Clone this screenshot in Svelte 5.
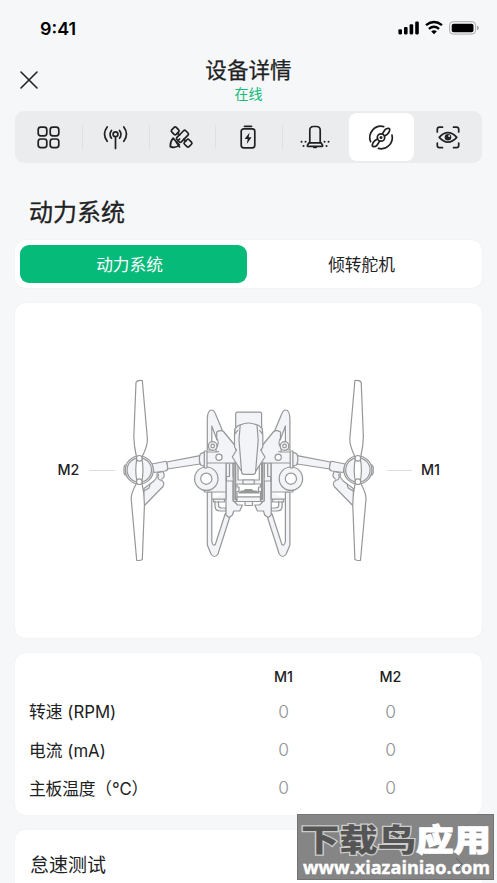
<script lang="ts">
    const tabs = ['overview', 'signal', 'satellite', 'battery', 'radar', 'power', 'vision'];
    const rows = [
        { label: '转速 (RPM)', m1: 0, m2: 0 },
        { label: '电流 (mA)', m1: 0, m2: 0 },
        { label: '主板温度（℃）', m1: 0, m2: 0, tight: true }
    ];

    let activeTab = $state('power');
    let segment = $state('motor');
</script>

{#snippet tabIcon(name: string)}
    <svg class="icon" viewBox="0 0 32 28" width="32" height="28">
        {#if name === 'overview'}
            <rect x="5.2" y="3.2" width="8.6" height="8.6" rx="2.6" />
            <rect x="17.2" y="3.2" width="8.6" height="8.6" rx="2.6" />
            <rect x="5.2" y="15" width="8.6" height="8.6" rx="2.6" />
            <rect x="17.2" y="15" width="8.6" height="8.6" rx="2.6" />
        {:else if name === 'signal'}
            <circle cx="15.5" cy="10.3" r="2.4" />
            <path d="M15.5 12.8V24.5M11.5 6.5Q8.5 10.3 11.5 14.2M19.5 6.5Q22.5 10.3 19.5 14.2M7.2 3Q1.8 10 7.2 17.3M23.8 3Q29.2 10 23.8 17.3" />
        {:else if name === 'satellite'}
            <rect x="6" y="3.7" width="6.4" height="6.4" rx="1.5" transform="rotate(45 9.2 6.9)" />
            <rect x="18.8" y="16" width="6.4" height="6.4" rx="1.5" transform="rotate(45 22 19.2)" />
            <rect x="10.2" y="9.2" width="12.4" height="6.2" rx="1.5" transform="rotate(-45 16.4 12.2)" />
            <path d="M11.5 9.2l2 2M17.8 15.2l2 2M12 16.5l1.6-1.5" />
            <path d="M7 14.2Q4 17.8 4.3 22.6Q10 24.8 13.3 20.8ZM10 17.7l3.6 5.2" />
        {:else if name === 'battery'}
            <rect x="9.2" y="4.8" width="13.6" height="19" rx="2.5" />
            <path d="M12.5 2.3h7" />
            <path class="solid" d="M17.6 8.5l-5 6.5h3.1l-.9 5 4.8-6.7h-3z" />
        {:else if name === 'radar'}
            <path d="M10.8 18.8V6.2Q10.8 2.5 14.5 2.5h3Q21.2 2.5 21.2 6.2v12.6" />
            <path d="M10 18.8h12l1.6 2.4q.2 1.2-1 1.2H9.4q-1.2 0-1-1.2Z" />
            <path class="solid" d="M13.5 22.8h5l-1 1.5h-3z" />
            <path class="dots" d="M2.5 17.8h.1M6.5 17.8h.1M4.5 22h.1M29.5 17.8h.1M25.5 17.8h.1M27.5 22h.1" />
        {:else if name === 'power'}
            <circle cx="16" cy="13.5" r="3.7" />
            <circle class="solid" cx="16" cy="13.5" r="1.5" />
            <path d="M17.4 9.8L20 5.8Q21 4.2 23.8 4.3Q25 4.5 24.6 6.5Q24 9 22 10.5L19.4 12M14.6 17.2L12 21.2Q11 22.8 8.2 22.7Q7 22.5 7.4 20.5Q8 18 10 16.5L12.6 15" />
            <path d="M18.7 2.6A11.2 11.2 0 0 0 5.6 17.6M27 11A11.2 11.2 0 0 1 13.4 24.4" />
        {:else}
            <path d="M5.3 8V5.4q0-2.2 2.2-2.2h3M21.5 3.2h3q2.2 0 2.2 2.2V8M26.7 19v2.5q0 2.2-2.2 2.2h-3M10.5 23.7h-3q-2.2 0-2.2-2.2V19" />
            <path d="M7.2 13.4Q16 4 24.8 13.4Q16 22.8 7.2 13.4Z" />
            <circle class="solid" cx="16" cy="13.3" r="3.3" />
            <circle class="glint" cx="17.2" cy="12" r="1" />
        {/if}
    </svg>
{/snippet}

{#snippet airframeSide()}
    <g class="shell">
        <!-- landing frame -->
        <path d="M207.3 450V419Q207.5 410 211.7 410Q214 410 215.5 414L223 432L217 440L211.8 426V450Z" />
        <path d="M207.3 492V545L211 554Q214.5 559 218 554L229.8 517L225.3 513.5L215.3 544.5Q212.5 546.5 211.8 541V492Z" />
        <path d="M215 501v5q0 5 5 5h6v-3h-4.5q-3 0-3-3v-4M213.5 499h11v3h-11z" />
        <path d="M226 463V515l3 2.6 3.5-2.6 1.2-4h6l2.8-6H237.5l-4.5-5V463Z" />
        <path d="M204.3 462H226v30h-21.7Z" />
        <path d="M226 492v7h-14" />
        <path d="M229.5 464v12.5h-3v4.5h6.8" />
        <!-- arm -->
        <path d="M166.8 462L200 455.6V464L167.5 469Z" />
        <path d="M157 473v4l-3 4-4 3-6 4.5-1 18.5L163 486.5Q165 482 162 481l-1-2q4-1 3-5l-1-2.7Z" />
        <path d="M158.5 474q-2 7 4 6M150 484l-1 4-5 3" />
        <path d="M152 464L164.5 461.5Q167 461 167 464L167.8 468Q167.8 470.5 165 471L154 472.5Z" />
        <!-- shoulder -->
        <path d="M216.7 432Q221 429.5 223.5 431.5L237 448V463H208L200.3 464.8V455L205 452L216 452V448Q220 443 216.7 438Z" />
        <path d="M216 452l3-.5" />
        <path d="M200.3 454q3-2 5-1v12q-3 2-5-1q-2-5 0-10Z" />
        <circle cx="212.7" cy="446" r="4.3" />
        <circle cx="212.7" cy="446" r="1.8" />
        <circle class="white" cx="219" cy="457.3" r="3.1" />
        <circle cx="206.3" cy="478.7" r="11.7" />
        <circle class="white" cx="206.3" cy="478.7" r="5.6" />
        <path d="M204.3 451v16q1.3 2.5 2.7 0V451Z" />
        <!-- motor -->
        <path d="M128 465h-3l-1 2v6l1 2h3" />
        <circle cx="139.3" cy="470" r="14" />
        <circle cx="139.3" cy="470" r="12.2" />
        <path class="white" d="M137.3 457Q134.2 470 137.3 483H141.5Q144.5 470 141.5 457Z" />
        <path class="white" d="M136 382.5Q137 380 142.3 380.5L147.4 439Q147.6 446 142 457H136.5Q134 446 133.8 437Z" />
        <path class="white" d="M136.7 483H142Q144.6 495 144.4 506L142.3 559.5Q140 561 136.7 560.3L131.2 499Q131 493 136.7 483Z" />
        <circle class="white" cx="139.3" cy="458.3" r="2.8" />
        <circle class="white" cx="139.3" cy="481.7" r="2.8" />
    </g>
{/snippet}

<main class="screen">
    <div class="status-bar">
        <span class="time">9:41</span>
        <svg viewBox="0 0 82 16" width="82" height="16">
            <rect x="0.4" y="9.2" width="3.6" height="5.2" rx="1.1" />
            <rect x="6" y="7" width="3.6" height="7.4" rx="1.1" />
            <rect x="11.6" y="4.2" width="3.6" height="10.2" rx="1.1" />
            <rect x="17.2" y="1.6" width="3.6" height="12.8" rx="1.1" />
            <path class="wave" d="M28 5.2Q36 -1.2 44 5.2M30.9 8.8Q36 4.8 41.1 8.8" />
            <path d="M33.2 11.4Q36 9.2 38.8 11.4L36 14.3Z" />
            <rect class="cell" x="51.6" y="1.7" width="26" height="12.4" rx="3.6" />
            <rect x="53.7" y="3.8" width="21.8" height="8.4" rx="2" />
            <path class="tip" d="M79 5.8q2 .6 2 2.2t-2 2.2z" />
        </svg>
    </div>

    <header>
        <button class="close" aria-label="关闭">
            <svg viewBox="0 0 20 20" width="20" height="20"><path d="M2 2l16 16M18 2L2 18" /></svg>
        </button>
        <div class="titles">
            <h1>设备详情</h1>
            <p class="online">在线</p>
        </div>
    </header>

    <nav class="tabs">
        {#each tabs as tab}
            <button class="tab" class:active={activeTab === tab} aria-label={tab} onclick={() => (activeTab = tab)}>
                {@render tabIcon(tab)}
            </button>
        {/each}
    </nav>

    <h2>动力系统</h2>

    <div class="segments">
        <button class:selected={segment === 'motor'} onclick={() => (segment = 'motor')}>动力系统</button>
        <button class:selected={segment === 'servo'} onclick={() => (segment = 'servo')}>倾转舵机</button>
    </div>

    <section class="card diagram">
        <svg viewBox="15 303 467 335" width="467" height="335">
            {@render airframeSide()}
            <g transform="translate(497.2 0) scale(-1 1)">
                {@render airframeSide()}
            </g>
            <g class="shell">
                <path d="M235.7 450V414Q235.7 412.2 237.5 412.2H259.8Q261.6 412.2 261.6 414V450Z" />
                <path d="M233.3 463H264V501.5H233.3Z" />
                <path class="rail" d="M235.3 463V499.5H262V463" />
                <path class="white" d="M238 463v17h21.3V463M237 484h23.5v3h-2v4.5h2v5.5H237v-5.5h2V487h-2Z" />
                <path d="M243 480h11.3v4H243ZM237 497h23.4v4.5H237ZM245 501.5h7.5v4H245Z" />
                <path class="slot" d="M239 493h20l-3-2h-3l-1.5-1.5h-6l-1.5 1.5h-2.5z" />
                <path d="M239.5 425Q234 427 234.5 435V447L236.5 450L232.3 457L243 473.5H254.3L265 457L260.7 450L262.8 447V435Q263 427 257.7 425Z" />
                <path d="M235 428v6l3-4" />
                <path d="M262.3 428v6l-3-4" />
                <path d="M240.2 425Q248.6 421 257 425L258.2 440L255.6 472Q255.5 474.3 253.5 474.3H243.8Q241.7 474.3 241.6 472L239 440Z" />
            </g>
            <path class="leader" d="M89 470.5h26M387 470.5h25" />
            <text x="57.5" y="475.3">M2</text>
            <text x="421" y="475.3">M1</text>
        </svg>
    </section>

    <section class="card readings">
        <span></span>
        <b>M1</b>
        <b>M2</b>
        {#each rows as row}
            <span class:tight={row.tight}>{row.label}</span>
            <em>{row.m1}</em>
            <em>{row.m2}</em>
        {/each}
    </section>

    <section class="card idle">
        <span>怠速测试</span>
        <svg viewBox="0 0 10 16" width="10" height="16"><path d="M2 2l6 6-6 6" /></svg>
    </section>

    <div class="watermark">
        <svg viewBox="0 0 197 66" width="197" height="66">
            <text class="mark dark" x="4" y="36.5" textLength="115" lengthAdjust="spacingAndGlyphs">下载鸟</text>
            <text class="mark" x="119" y="36.5" textLength="75" lengthAdjust="spacingAndGlyphs">应用</text>
            <text class="site" x="6" y="60" textLength="187" lengthAdjust="spacingAndGlyphs">www.xiazainiao.com</text>
            <path class="chevron" d="M159 44l6 6-6 6" />
        </svg>
    </div>
</main>

<style>
    :global(body) {
        margin: 0;
        background: #f6f7f9;
    }

    .screen {
        position: relative;
        box-sizing: border-box;
        width: 497px;
        height: 883px;
        padding: 0 15px;
        overflow: hidden;
        background: #f6f7f9;
        color: #202122;
        font-family: Inter, "Noto Sans CJK SC", sans-serif;
    }

    button {
        padding: 0;
        border: 0;
        background: none;
        color: inherit;
        font: inherit;
    }

    .status-bar {
        display: flex;
        align-items: center;
        justify-content: space-between;
        height: 56px;
        padding: 0 2px 0 25px;
        color: #000;
    }

    .time {
        font-size: 17.9px;
        font-weight: 600;
    }

    .wave,
    .cell {
        fill: none;
        stroke: #000;
        stroke-width: 2.3;
    }

    .cell {
        stroke: #a7a8aa;
        stroke-width: 1;
    }

    .tip {
        fill: #a7a8aa;
    }

    header {
        display: grid;
        grid-template-columns: 28px 1fr 28px;
        height: 55px;
    }

    .close {
        height: 47px;
    }

    .close svg {
        display: block;
        margin: auto;
    }

    .close path {
        fill: none;
        stroke: #202122;
        stroke-width: 1.6;
        stroke-linecap: round;
    }

    .titles {
        text-align: center;
    }

    h1 {
        margin: 0;
        font-size: 21.6px;
        font-weight: 400;
        line-height: 28px;
        -webkit-text-stroke: 0.25px;
    }

    .online {
        margin: 0;
        color: #0fba7a;
        font-size: 14px;
        line-height: 20px;
    }

    .tabs {
        display: grid;
        grid-template-columns: repeat(7, 1fr);
        box-sizing: border-box;
        height: 52px;
        padding: 2px 1px;
        border-radius: 9px;
        background: #ebecee;
    }

    .tab {
        display: flex;
        align-items: center;
        justify-content: center;
        position: relative;
        margin: 0 1px;
        border-radius: 8px;
    }

    .tab:nth-child(-n + 4)::after {
        content: "";
        position: absolute;
        right: -2px;
        width: 1px;
        height: 24px;
        background: #dfe0e2;
    }

    .tab.active {
        background: #fff;
    }

    .icon {
        margin-top: 1px;
        fill: none;
        stroke: #202122;
        stroke-width: 1.7;
        stroke-linecap: round;
        stroke-linejoin: round;
    }

    .solid {
        fill: #202122;
        stroke: none;
    }

    .glint {
        fill: #ebecee;
        stroke: none;
    }

    .dots {
        stroke-width: 1.9;
    }

    h2 {
        margin: 32px 0 0 14px;
        font-size: 24px;
        font-weight: 400;
        line-height: 36px;
        -webkit-text-stroke: 0.3px;
    }

    .segments {
        display: grid;
        grid-template-columns: 1fr 1fr;
        gap: 3px;
        box-sizing: border-box;
        height: 48px;
        margin-top: 9px;
        padding: 5px;
        border-radius: 10px;
        background: #fff;
        box-shadow: 0 0 1px #dfe1e4;
        font-size: 16.7px;
    }

    .segments button {
        padding-right: 4px;
        border-radius: 9px;
    }

    .segments .selected {
        padding-right: 8px;
        background: #06ba7a;
        color: #fff;
    }

    .card {
        box-sizing: border-box;
        margin-top: 15px;
        border-radius: 10px;
        background: #fff;
        box-shadow: 0 0 1px #dfe1e4;
    }

    .diagram {
        height: 335px;
    }

    .diagram svg {
        display: block;
    }

    .diagram text {
        fill: #202122;
        font-size: 14.3px;
        font-weight: 500;
    }

    .shell {
        fill: #f2f4f7;
        stroke: #969798;
        stroke-width: 1.2;
        stroke-linejoin: round;
    }

    .white {
        fill: #fff;
    }

    .rail {
        stroke-width: 2;
    }

    .slot {
        fill: #969798;
    }

    .leader {
        stroke: #dcdddf;
    }

    .readings {
        display: grid;
        grid-template-columns: 201px 107px 107px;
        grid-template-rows: 31px repeat(3, 38.4px);
        align-items: center;
        height: 162px;
        padding: 8px 14px;
    }

    .readings span {
        font-size: 16.8px;
    }

    .readings .tight {
        letter-spacing: -0.2px;
    }

    .readings b,
    .readings em {
        font-style: normal;
        text-align: center;
    }

    .readings b {
        font-size: 14.3px;
        font-weight: 500;
    }

    .readings em {
        color: #909193;
        font-size: 17.4px;
        font-weight: 300;
    }

    .idle {
        display: flex;
        align-items: center;
        justify-content: space-between;
        height: 66px;
        padding: 0 18px 0 15px;
        font-size: 19px;
    }

    .idle path {
        fill: none;
        stroke: #777;
        stroke-width: 1.5;
    }

    .watermark {
        position: absolute;
        top: 814px;
        left: 297px;
        width: 197px;
        height: 66px;
        background: #858585;
        box-shadow: inset 0 0 0 1px #737373;
    }

    .mark {
        fill: #fff;
        stroke: #fff;
        stroke-width: 1;
        font-family: "Noto Sans CJK SC", sans-serif;
        font-size: 31px;
        font-weight: 900;
    }

    .mark.dark {
        fill: #555;
        stroke: #ccc;
        stroke-width: 2.4;
        paint-order: stroke;
    }

    .site {
        fill: #fff;
        stroke: #fff;
        stroke-width: 0.4;
        font-family: "Open Sans", "Noto Sans", sans-serif;
        font-size: 18px;
        font-weight: 700;
    }

    .chevron {
        fill: none;
        stroke: #666;
    }
</style>
